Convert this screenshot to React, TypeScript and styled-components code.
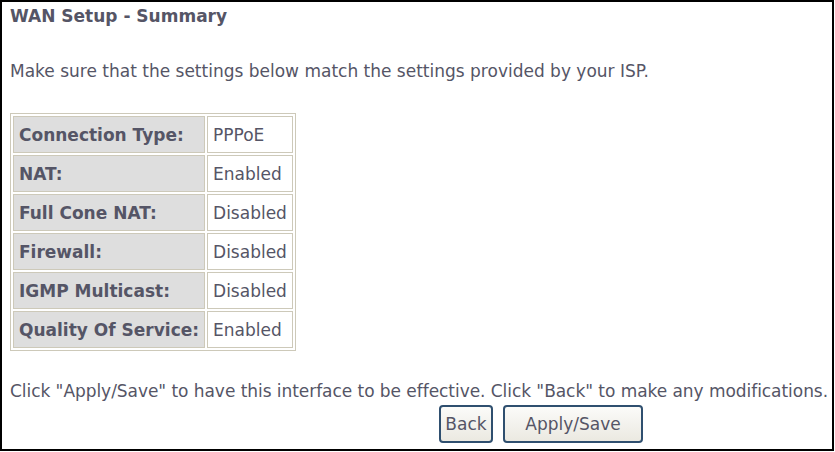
import React from "react";
import styled, { createGlobalStyle } from "styled-components";

const GlobalStyle = createGlobalStyle`
    html, body {
        margin: 0;
        padding: 0;
        background: #fff;
    }
    body {
        font-family: "DejaVu Sans", Verdana, sans-serif;
        font-size: 17px;
        color: #555566;
    }
`;

const Page = styled.div`
    box-sizing: border-box;
    width: 834px;
    height: 451px;
    border: 2px solid #000;
    padding: 4px 8px 0;
`;

const Title = styled.div`
    font-weight: bold;
    line-height: 20px;
    margin-bottom: 35px;
`;

const Text = styled.p<{ tight?: boolean }>`
    margin: 0;
    line-height: 20px;
    white-space: nowrap;
    letter-spacing: ${props => (props.tight ? "-0.05px" : "normal")};
`;

const Summary = styled.table`
    margin: 32px 0 30px;
    border: 1px solid #cdc9b9;
    border-spacing: 2px;
    background: #fff;
    td {
        height: 35px;
        border: 1px solid #cdc9b9;
        padding: 0 5px;
        white-space: nowrap;
    }
`;

const Label = styled.td`
    font-weight: bold;
    background: #dedede;
`;

const Buttons = styled.div`
    display: flex;
    gap: 10px;
    margin: 4px 0 0 429px;
`;

const Button = styled.button<{ wide?: boolean }>`
    box-sizing: border-box;
    height: 38px;
    width: ${props => (props.wide ? "140px" : "54px")};
    font-family: inherit;
    font-size: 17px;
    color: #555566;
    border: 2px solid #2f4f6f;
    border-radius: 4px;
    background: linear-gradient(#fbfbf9, #ebe9e1);
    padding: 0;
`;

const rows: [string, string][] = [
    ["Connection Type:", "PPPoE"],
    ["NAT:", "Enabled"],
    ["Full Cone NAT:", "Disabled"],
    ["Firewall:", "Disabled"],
    ["IGMP Multicast:", "Disabled"],
    ["Quality Of Service:", "Enabled"],
];

const App = () => (
    <Page>
        <GlobalStyle />
        <Title>WAN Setup - Summary</Title>
        <Text>Make sure that the settings below match the settings provided by your ISP.</Text>
        <Summary>
            <tbody>
                {rows.map(([label, value]) => (
                    <tr key={label}>
                        <Label>{label}</Label>
                        <td>{value}</td>
                    </tr>
                ))}
            </tbody>
        </Summary>
        <Text tight>
            Click "Apply/Save" to have this interface to be effective. Click "Back" to make any modifications.
        </Text>
        <Buttons>
            <Button>Back</Button>
            <Button wide>Apply/Save</Button>
        </Buttons>
    </Page>
);

export default App;
